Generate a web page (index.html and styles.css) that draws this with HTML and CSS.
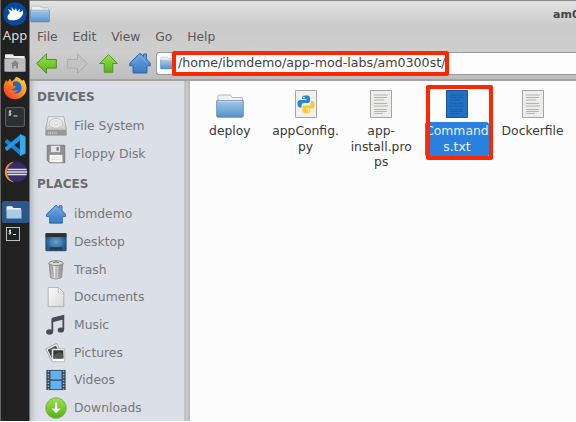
FILE: index.html
```
<!DOCTYPE html>
<html lang="en">
<head>
<meta charset="utf-8">
<title>am0300st - File Manager</title>
<link rel="stylesheet" href="styles.css">
</head>
<body>
<svg class="defs" width="0" height="0" aria-hidden="true">
  <defs>
    <linearGradient id="blue" x1="0" y1="0" x2="0" y2="1"><stop offset="0" stop-color="#a3c8e8"/><stop offset="1" stop-color="#5492cc"/></linearGradient>
    <linearGradient id="home" x1="0" y1="0" x2="0" y2="1"><stop offset="0" stop-color="#6ba5e3"/><stop offset="1" stop-color="#3b7ac3"/></linearGradient>
    <linearGradient id="green" x1="0" y1="0" x2="0" y2="1"><stop offset="0" stop-color="#a0e04f"/><stop offset="1" stop-color="#55b415"/></linearGradient>
    <linearGradient id="metal" x1="0" y1="0" x2="0" y2="1"><stop offset="0" stop-color="#f7f7f7"/><stop offset="1" stop-color="#b9b9b9"/></linearGradient>
    <linearGradient id="paper" x1="0" y1="0" x2="1" y2="1"><stop offset="0" stop-color="#fcfcfc"/><stop offset="1" stop-color="#d9d9d9"/></linearGradient>
    <linearGradient id="can"><stop offset="0" stop-color="#8d8d8b"/><stop offset=".4" stop-color="#e9e9e7"/><stop offset="1" stop-color="#868684"/></linearGradient>
    <linearGradient id="fire" x1="1" y1="0" x2="0" y2="1"><stop offset="0" stop-color="#ffe13b"/><stop offset=".5" stop-color="#ff8a16"/><stop offset="1" stop-color="#f5224b"/></linearGradient>
    <radialGradient id="desk"><stop offset="0" stop-color="#69a3d4"/><stop offset="1" stop-color="#245b8e"/></radialGradient>
  </defs>
  <symbol id="i-folder" viewBox="0 0 28 24">
    <path d="M2 12V2.500Q2 1 3.500 1h10Q15 1 15.500 2.500L16 3.500h9q1.500 0 1.500 1.500v7z" fill="#f1f1f0" stroke="#a5a5a3" stroke-width=".8"/>
    <path d="M.7 6.700h26.600v15.200q0 1.300-1.300 1.300H2q-1.300 0-1.300-1.300z" fill="url(#blue)" stroke="#5582ac" stroke-width=".8"/>
    <path d="M1.500 7.600h25" stroke="#c8dff2" stroke-width=".8"/>
  </symbol>
  <symbol id="i-home" viewBox="0 0 22 22">
    <path d="M11 1.200 14.500 4.500V2h3v5l3.800 4.200v2.600H18V21H4v-7.200H.7v-2.600z" fill="url(#home)" stroke="#2f5f9d" stroke-width=".9"/>
    <path d="M4 11.500 11 4l7 7.500" fill="none" stroke="#8fbcf0" stroke-width=".6"/>
  </symbol>
  <symbol id="i-left" viewBox="0 0 20 20"><path d="M.6 10 10 .8v5.400h9.400v8.200H10v5z" stroke-width=".9"/></symbol>
  <symbol id="i-up" viewBox="0 0 20 20"><path d="M10 .6 19.300 10h-4.800v9.200h-9V10H.7z" stroke-width=".9"/></symbol>
  <symbol id="i-sheet" viewBox="0 0 22 28">
    <path d="M.5.5h21v27H.5z" fill="#ededeb" stroke="#a5a5a3"/>
    <path d="M4 5h14M4 7.500h13M4 10h10M4 13.500h13M4 16h14M4 19.500h13M4 21.500h13M4 23.500h9" stroke="#b4b4b2"/>
  </symbol>
</svg>

<div class="screen">
  <nav class="dock">
    <svg class="logo" viewBox="0 0 24 24"><circle cx="12" cy="12" r="11.800" fill="#064aa0"/><path d="M4.500 15.500c0-2 1-3.500 2.500-4.500L5 7l4 2-.5-4 3 3.500L13 6l1 3.500 3-3-.8 4L20 8.500c.5 3-.5 6-3.500 8-3 1.800-6 2-8.500 1.800-2 0-3.500-1-3.500-2.800z" fill="#fff"/></svg>
    <span class="dock-label">App</span>
    <svg class="dock-home" viewBox="0 0 22 18"><path d="M1 4V1q0-.7.8-.7H9L10 2h10q.8 0 .8 1v2z" fill="#eee"/><path d="M.4 4.500h21.200V17q0 .8-.8.8H1.200Q.4 17.800.4 17z" fill="#bdbdbd"/><path d="m11 6 4 4h-1v4.500h-2V12h-2v2.500H8V10H7z" fill="#858585"/></svg>
    <svg class="firefox" viewBox="0 0 24 24"><path d="M13 .8c4 1 5 3 6 4l2-1c1 3 2.600 5 2.500 9C23 19 18 23.300 12 23.300S.6 18.500.6 12c0-3 1-5.500 2.500-8l1.500 2L7 2.500l1.500 3c2-1 3.500-2.500 4.500-4.700z" fill="url(#fire)"/><path d="M10 6c5-2 8 1 8.500 5 .5 5-3.500 7-6.500 6.500-3-.3-5-2.500-5-5h4l2-2-3-1z" fill="#2465c5"/><path d="M5 10c2-1 5 0 7 1-2 1-1 2-4 2 1 2 5 2 7 1-2 4-8 4-10 0z" fill="#ff701e"/></svg>
    <svg class="term" viewBox="0 0 20 20"><rect x=".6" y=".6" width="18.800" height="18.800" rx="1.500" fill="#2d3030" stroke="#646464"/><path d="M6.500 4.200C4 3.500 3.300 5.500 5 6s1.500 2.500-1.500 1.800M5 3v6M8.500 9h4" fill="none" stroke="#ddd" stroke-width="1"/></svg>
    <svg class="code" viewBox="0 0 22 22"><path d="M1 7 3 5l14 11.500V22L1 8.500z" fill="#1684ce"/><path d="M1 15l2 2L17 5.500V0L1 13.500z" fill="#2397e3"/><path d="m16 0 5.500 2.500v17L16 22z" fill="#36a9ed"/></svg>
    <svg class="eclipse" viewBox="0 0 25 22"><path d="M11 .4A10.700 10.700 0 0 0 11 21.600 14 14 0 0 1 11 .4z" fill="#f29723"/><circle cx="14" cy="11" r="10.200" fill="#362c68"/><path d="M4.500 8.500h19.200M4 11h20.200M4.500 13.500h19.200" stroke="#e5e2f0" stroke-width="1.500"/></svg>
    <div class="task active"><svg viewBox="0 0 16 13"><path d="M.5 2V1q0-.7.700-.7h5L7.500 2h7.300v3H.5z" fill="#edf3f7"/><path d="M.5 3.500h15v9H.5z" fill="#a9cbe5"/></svg></div>
    <div class="task"><svg viewBox="0 0 14 14"><rect x=".5" y=".5" width="13" height="13" fill="#202323" stroke="#bfbfbf"/><path d="M5 3.500c-2-.5-2.500 1-1 1.500s1 2-1.300 1.500M4 2.500v5M7 7.500h3" fill="none" stroke="#fff"/></svg></div>
  </nav>

  <main class="window">
    <header class="titlebar">
      <svg class="title-icon"><use href="#i-folder"/></svg>
      <span class="title">am0</span>
    </header>
    <div class="menubar"><span>File</span><span>Edit</span><span>View</span><span>Go</span><span>Help</span></div>
    <div class="toolbar">
      <svg class="arrow"><use href="#i-left"/></svg>
      <svg class="arrow forward"><use href="#i-left"/></svg>
      <svg class="arrow up"><use href="#i-up"/></svg>
      <svg class="go-home"><use href="#i-home"/></svg>
      <div class="location"><svg><use href="#i-folder"/></svg><span>/home/ibmdemo/app-mod-labs/am0300st/</span><i class="mark path-mark"></i></div>
    </div>
    <div class="content">
      <aside class="sidebar">
        <h2>DEVICES</h2>
        <ul>
          <li><svg viewBox="0 0 24 24"><path d="M3.500 2h17l2.700 13v7H.8v-7z" fill="url(#metal)" stroke="#999" stroke-width=".8"/><ellipse cx="12" cy="9" rx="7.500" ry="5.500" fill="#e5e5e5" stroke="#c0c0c0"/><circle cx="12" cy="9" r="1.600" fill="#fff" stroke="#bbb" stroke-width=".6"/><path d="M1 15.500h22V22H1z" fill="#999"/><path d="M1 15.500h22M4 18v3m2-3v3m2-3v3m2-3v3m2-3v3" stroke="#c8c8c8"/></svg>File System</li>
          <li><svg viewBox="0 0 24 24"><path d="M2.500 2.500h19v19H5l-2.500-2.500z" fill="#909090" stroke="#777"/><path d="M6.500 3h10v7h-10z" fill="#e6e6e6"/><path d="M12.500 4.500h2.500v4h-2.500z" fill="#777"/><path d="M5 13h14v8H5z" fill="#fafafa"/><path d="M7 15.500h10M7 18h10" stroke="#ddd"/></svg>Floppy Disk</li>
        </ul>
        <h2>PLACES</h2>
        <ul class="places">
          <li><svg viewBox="0 0 24 24"><use href="#i-home" x="1" y="1" width="22" height="22"/></svg>ibmdemo</li>
          <li><svg viewBox="0 0 24 24"><path d="M1 3h22v18.500H1z" fill="url(#desk)" stroke="#28435d"/><path d="M.7 2.500h22.600v4H.7z" fill="#302f2e"/><path d="M5 17.500h14V21H5z" fill="#263f55"/></svg>Desktop</li>
          <li><svg viewBox="0 0 24 24"><path d="m4.500 5 1.500 15.500q6 3 12 0L19.500 5z" fill="url(#can)" stroke="#888" stroke-width=".8"/><path d="m8 8 1 12m3-12v13m4-13-1 12" stroke="#8c8c8a" stroke-width=".8"/><ellipse cx="12" cy="4.500" rx="7.800" ry="2.600" fill="#d6d6d4" stroke="#777" stroke-width=".9"/><path d="M9 4q3-2 6 0" fill="none" stroke="#666"/></svg>Trash</li>
          <li><svg viewBox="0 0 24 24"><path d="M3.500 1.500h11l6 6v15h-17z" fill="url(#paper)" stroke="#a0a0a0" stroke-width=".8"/><path d="M14.500 1.500v6h6z" fill="#fff" stroke="#aaa" stroke-width=".7"/></svg>Documents</li>
          <li><svg viewBox="0 0 24 24"><path d="M8 5 20 2v15M8 5v14" fill="none" stroke="#4b4b4b" stroke-width="2"/><path d="m8 4.500 12-3v4.500L8 9z" fill="#4b4b4b"/><ellipse cx="5" cy="19.500" rx="3.800" ry="3" fill="#4b4b4b"/><ellipse cx="17.300" cy="17.500" rx="3.500" ry="2.800" fill="#4b4b4b"/></svg>Music</li>
          <li><svg viewBox="0 0 24 24"><path d="m.8 7.500 12-6 5 11-11 7z" fill="#eee" stroke="#888" stroke-width=".7"/><path d="m3 8.500 9-4.500 3 7-8 6z" fill="#45483f"/><path d="M7.500 7.500h14v14h-14z" fill="#fff" stroke="#999" stroke-width=".7"/><path d="M9 9h11v9H9z" fill="#333832"/><path d="m9 15 6-4 5 2v5H9z" fill="#55584c"/></svg>Pictures</li>
          <li><svg viewBox="0 0 24 24"><path d="M1.500 1h21v22h-21z" fill="#354552"/><path d="M6 2h12v9.500H6zM6 12.800h12V22H6z" fill="#62b0f3"/><path d="M3.700 2v20.500m16.600-20.500v20.500" stroke="#aeb6bd" stroke-width="1.600" stroke-dasharray="1.500 1.700"/></svg>Videos</li>
          <li><svg viewBox="0 0 24 24"><circle cx="12" cy="12" r="11.200" fill="url(#green)" stroke="#64a93a" stroke-width=".8"/><path d="M11 6h2.200v6.500H17l-4.900 5.200-4.900-5.200H11z" fill="#fff"/></svg>Downloads</li>
        </ul>
      </aside>
      <section class="files">
        <figure><svg class="folder"><use href="#i-folder"/></svg><figcaption>deploy</figcaption></figure>
        <figure><svg class="sheet" viewBox="0 0 22 28"><path d="M.5.5h21v27H.5z" fill="#f0f0ee" stroke="#a5a5a3"/><path d="M11 5.500c-4 0-4 1.200-4 3.500h4.500v1H4.700c-3 0-3 7.500.3 7.500h1.500V15q0-2 2.500-2h4q2 0 2-2V8c0-2-1.500-2.500-4-2.500z" fill="#2e82cf"/><path d="M11.500 23c4 0 4-1.200 4-3.500H11v-1h6.300c3 0 3-7.500.2-7.500H16v2.500q0 2-2.500 2H9.800q-2.300 0-2.300 2v3c0 2 1.500 2.500 4 2.500z" fill="#fdca21"/><circle cx="9" cy="7.500" r=".8" fill="#fff"/><circle cx="13.500" cy="21" r=".8" fill="#fff"/></svg><figcaption>appConfig.<br>py</figcaption></figure>
        <figure><svg class="sheet"><use href="#i-sheet"/></svg><figcaption>app-<br>install.pro<br>ps</figcaption></figure>
        <figure class="selected"><svg class="sheet" viewBox="0 0 22 28"><path d="M.5.5h21v27H.5z" fill="#2070c4" stroke="#1b5798"/><path d="M4 5h14M4 7.500h13M4 10h10M4 13.500h13M4 16h14M4 19.500h13M4 21.500h13M4 23.500h9" stroke="#1b60ab" stroke-width=".9"/></svg><figcaption>Command<br>s.txt</figcaption><i class="mark file-mark"></i></figure>
        <figure><svg class="sheet"><use href="#i-sheet"/></svg><figcaption>Dockerfile</figcaption></figure>
      </section>
    </div>
  </main>
</div>
</body>
</html>
```
FILE: styles.css
```
* { box-sizing: border-box; }
body { margin: 0; background: #fff; overflow: hidden; font: 12.35px/16px "DejaVu Sans", sans-serif; color: #3a3a3a; }
svg { display: block; flex: none; }
.defs { position: absolute; }
.screen { display: flex; width: 576px; height: 421px; overflow: hidden; }

.dock { width: 30px; flex: none; display: flex; flex-direction: column; align-items: center; background: #212121; border-left: 1px solid #666; border-right: 1px solid #777; padding-top: 2px; }
.logo { width: 24px; height: 24px; }
.dock-label { height: 18px; color: #ddd; font: 13px/18px "Noto Sans", sans-serif; }
.dock-home { width: 22px; height: 18px; margin-top: 10px; }
.firefox { width: 24px; height: 24px; margin-top: 4px; }
.term { width: 20px; height: 20px; margin-top: 7px; }
.code { width: 22px; height: 22px; margin-top: 7px; }
.eclipse { width: 25px; height: 22px; margin-top: 5px; }
.task { width: 27px; height: 22px; display: flex; align-items: center; padding-left: 4px; }
.task svg { width: 14px; height: 14px; }
.task.active { margin-top: 18px; background: #2c578a; border-radius: 2px; }
.task.active svg { width: 16px; height: 13px; }

.window { flex: 1; min-width: 0; display: flex; flex-direction: column; background: linear-gradient(#e3e3e3, #cbcbcb 24px, #cecece 50px, #bcbcbc 80px); border-top: 1px solid #888; }
.titlebar { height: 26px; flex: none; display: flex; justify-content: space-between; overflow: hidden; }
.title-icon { width: 20px; height: 18px; margin-top: 4px; }
.title { width: 23px; margin-top: 6px; overflow: hidden; white-space: nowrap; font-size: 11px; font-weight: bold; color: #444; }
.menubar { height: 20px; flex: none; display: flex; gap: 14.8px; padding: 2px 0 0 7px; color: #5a5a5a; }
.toolbar { height: 32px; flex: none; display: flex; align-items: center; padding-left: 6px; }
.arrow { width: 21px; height: 21px; fill: url(#green); stroke: #478e20; }
.forward { margin-left: 10px; fill: #c3c3c3; stroke: #aaa; transform: scaleX(-1); }
.up { width: 19px; margin-left: 11px; }
.go-home { width: 22px; height: 22px; margin-left: 11px; }
.location { position: relative; flex: 1; height: 23px; margin-left: 5px; display: flex; align-items: center; background: #fdfdfd; border: 1px solid #989898; border-right: 0; border-radius: 3px 0 0 3px; padding-left: 3px; white-space: nowrap; color: #444; font-size: 12.65px; }
.location svg { width: 15px; height: 14px; margin-right: 3px; }
.mark { position: absolute; border: 4px solid #ff2600; border-radius: 2px; }
.path-mark { left: 15px; top: -2px; width: 277px; height: 25px; }

.content { flex: 1; min-height: 0; display: flex; border-top: 2px solid #a3a3a3; }
.sidebar { width: 160px; flex: none; padding: 6px 0 0 7px; background: linear-gradient(90deg, #b9bec3, #d5dae1 5px, #dbe0e8 9px, #dbe0e8 154px, #a9acb0 155px, #cfcfcf 156px, #b5b5b5 160px); color: #777; }
h2 { margin: 0; font-size: 12px; line-height: 20px; color: #6c6c6c; }
ul { list-style: none; margin: 0; padding: 5px 0 7px; }
.places { padding-top: 6px; }
li { display: flex; align-items: center; gap: 6px; height: 27.7px; padding-left: 8px; }
li svg { width: 22px; height: 22px; margin-right: 1px; }
.files { flex: 1; min-width: 0; display: flex; background: #fcfcfc; padding: 9px 0 0 2px; overflow: hidden; }
figure { position: relative; width: 75.7px; flex: none; margin: 0; display: flex; flex-direction: column; align-items: center; text-align: center; }
.sheet { width: 22px; height: 28px; margin-bottom: 5px; }
.folder { width: 28px; height: 24px; margin: 4px 0 5px; }
figcaption { line-height: 15.7px; white-space: nowrap; padding-top: 1px; }
.selected figcaption { width: 64px; background: #2a80df; color: #e8f2fd; border-radius: 3px; margin-top: -1px; padding: 2px 0; }
.file-mark { left: 7px; top: -5px; width: 67px; height: 75px; }
```
